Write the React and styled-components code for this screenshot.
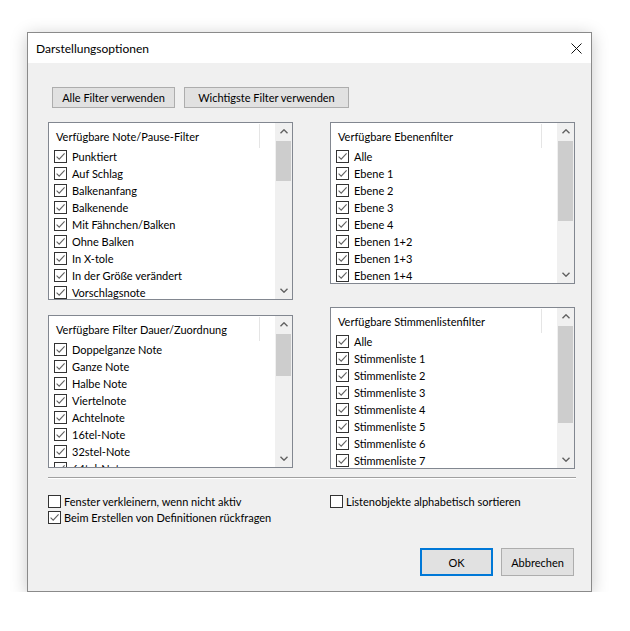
import React from "react";
import styled, { createGlobalStyle } from "styled-components";

const Global = createGlobalStyle`
  html, body { margin: 0; padding: 0; background: #ffffff; }
  body { font-family: Lato, "Liberation Sans", sans-serif; font-size: 11px; color: #000; }
  * { box-sizing: border-box; }
`;

const Page = styled.div`
  padding: 32px 0 0 27px;
`;

const Dialog = styled.div`
  width: 565px;
  height: 560px;
  border: 1px solid #8a8a8a;
  background: #f0f0f0;
  box-shadow: 0 3px 16px rgba(0, 0, 0, 0.22);
  display: flex;
  flex-direction: column;
`;

const TitleBar = styled.div`
  height: 30px;
  background: #ffffff;
  display: flex;
  align-items: center;
  justify-content: space-between;
  padding: 0 9px 0 8px;
  font-size: 12px;
`;

const CloseIcon = () => (
  <svg width="11" height="11" viewBox="0 0 11 11">
    <path d="M0.5 0.5 L10.5 10.5 M10.5 0.5 L0.5 10.5" stroke="#111" strokeWidth="1" />
  </svg>
);

const Body = styled.div`
  flex: 1;
  display: flex;
  flex-direction: column;
  padding: 0 15px 15px 20px;
`;

const TopButtons = styled.div`
  display: flex;
  gap: 9px;
  margin: 24px 0 0 4px;
`;

const Button = styled.button`
  height: ${(p) => p.$h || 21}px;
  width: ${(p) => p.$w}px;
  padding: 0;
  font-family: inherit;
  font-size: inherit;
  color: #000;
  background: #e1e1e1;
  border: ${(p) => (p.$default ? "2px solid #0078d7" : "1px solid #adadad")};
  display: flex;
  align-items: center;
  justify-content: center;
`;

const Columns = styled.div`
  display: grid;
  grid-template-columns: 245px 245px;
  column-gap: 37px;
  margin-top: 14px;
`;

const Column = styled.div`
  display: flex;
  flex-direction: column;
  gap: ${(p) => p.$gap}px;
`;

const ListBox = styled.div`
  height: ${(p) => p.$h}px;
  border: 1px solid #828790;
  background: #ffffff;
  display: flex;
  overflow: hidden;
`;

const ListContent = styled.div`
  flex: 1;
  display: flex;
  flex-direction: column;
  overflow: hidden;
`;

const HeaderCell = styled.div`
  height: 25px;
  flex: none;
  width: 211px;
  display: flex;
  align-items: center;
  padding: 1px 0 0 7px;
  white-space: nowrap;
  position: relative;
  &::after {
    content: "";
    position: absolute;
    right: 0;
    top: 1px;
    bottom: 0;
    width: 1px;
    background: #e5e5e5;
  }
`;

const Row = styled.div`
  height: 17px;
  flex: none;
  display: flex;
  align-items: center;
  padding: 0 0 0 5px;
  gap: 5px;
  white-space: nowrap;
`;

const ScrollBar = styled.div`
  width: 17px;
  flex: none;
  background: #f0f0f0;
  display: flex;
  flex-direction: column;
`;

const ArrowCell = styled.div`
  height: 17px;
  flex: none;
  display: flex;
  align-items: center;
  justify-content: center;
`;

const Track = styled.div`
  flex: 1;
  display: flex;
  flex-direction: column;
  padding: 1px 1px 0 1px;
`;

const Thumb = styled.div`
  background: #cdcdcd;
  flex: none;
`;

const Chevron = ({ down }) => (
  <svg width="8" height="5" viewBox="0 0 8 5">
    <polyline
      points={down ? "0.5,0.8 4,4.2 7.5,0.8" : "0.5,4.2 4,0.8 7.5,4.2"}
      fill="none"
      stroke="#606060"
      strokeWidth="1.4"
    />
  </svg>
);

const CheckBox = ({ checked }) => (
  <svg width="13" height="13" viewBox="0 0 13 13" style={{ flex: "none" }}>
    <rect x="0.5" y="0.5" width="12" height="12" fill="#fff" stroke="#333" strokeWidth="1" />
    {checked && (
      <polyline points="2.6,6.6 5.2,9.2 10.6,3.4" fill="none" stroke="#606060" strokeWidth="1.1" />
    )}
  </svg>
);

const Separator = styled.div`
  margin-top: 8px;
  height: 2px;
  border-top: 1px solid #a0a0a0;
  border-bottom: 1px solid #ffffff;
`;

const Options = styled.div`
  display: grid;
  grid-template-columns: 282px 1fr;
  margin-top: 14px;
`;

const OptionCol = styled.div`
  display: flex;
  flex-direction: column;
`;

const Option = styled.label`
  height: 16px;
  display: flex;
  align-items: center;
  gap: 3px;
  white-space: nowrap;
`;

const Footer = styled.div`
  margin-top: auto;
  display: flex;
  justify-content: flex-end;
  gap: 8px;
  padding-right: 2px;
`;

const FilterList = ({ title, items, height, thumb }) => (
  <ListBox $h={height}>
    <ListContent>
      <HeaderCell>{title}</HeaderCell>
      {items.map((it) => (
        <Row key={it}>
          <CheckBox checked />
          <span>{it}</span>
        </Row>
      ))}
    </ListContent>
    <ScrollBar>
      <ArrowCell>
        <Chevron />
      </ArrowCell>
      <Track>
        <Thumb style={{ height: thumb }} />
      </Track>
      <ArrowCell>
        <Chevron down />
      </ArrowCell>
    </ScrollBar>
  </ListBox>
);

const noteFilters = [
  "Punktiert",
  "Auf Schlag",
  "Balkenanfang",
  "Balkenende",
  "Mit Fähnchen/Balken",
  "Ohne Balken",
  "In X-tole",
  "In der Größe verändert",
  "Vorschlagsnote",
  "Stichnote",
  "Pause",
];

const layerFilters = [
  "Alle",
  "Ebene 1",
  "Ebene 2",
  "Ebene 3",
  "Ebene 4",
  "Ebenen 1+2",
  "Ebenen 1+3",
  "Ebenen 1+4",
  "Ebenen 2+3",
];

const durationFilters = [
  "Doppelganze Note",
  "Ganze Note",
  "Halbe Note",
  "Viertelnote",
  "Achtelnote",
  "16tel-Note",
  "32stel-Note",
  "64tel-Note",
  "128tel-Note",
];

const partFilters = [
  "Alle",
  "Stimmenliste 1",
  "Stimmenliste 2",
  "Stimmenliste 3",
  "Stimmenliste 4",
  "Stimmenliste 5",
  "Stimmenliste 6",
  "Stimmenliste 7",
  "Stimmenliste 8",
];

export default function App() {
  return (
    <Page>
      <Global />
      <Dialog>
        <TitleBar>
          <span>Darstellungsoptionen</span>
          <CloseIcon />
        </TitleBar>
        <Body>
          <TopButtons>
            <Button $w={123}>Alle Filter verwenden</Button>
            <Button $w={165}>Wichtigste Filter verwenden</Button>
          </TopButtons>
          <Columns>
            <Column $gap={15}>
              <FilterList title="Verfügbare Note/Pause-Filter" items={noteFilters} height={178} thumb={40} />
              <FilterList title="Verfügbare Filter Dauer/Zuordnung" items={durationFilters} height={153} thumb={42} />
            </Column>
            <Column $gap={23}>
              <FilterList title="Verfügbare Ebenenfilter" items={layerFilters} height={162} thumb={80} />
              <FilterList title="Verfügbare Stimmenlistenfilter" items={partFilters} height={162} thumb={97} />
            </Column>
          </Columns>
          <Separator />
          <Options>
            <OptionCol>
              <Option>
                <CheckBox />
                <span>Fenster verkleinern, wenn nicht aktiv</span>
              </Option>
              <Option>
                <CheckBox checked />
                <span>Beim Erstellen von Definitionen rückfragen</span>
              </Option>
            </OptionCol>
            <OptionCol>
              <Option>
                <CheckBox />
                <span>Listenobjekte alphabetisch sortieren</span>
              </Option>
            </OptionCol>
          </Options>
          <Footer>
            <Button $w={73} $h={28} $default>
              OK
            </Button>
            <Button $w={73} $h={28}>
              Abbrechen
            </Button>
          </Footer>
        </Body>
      </Dialog>
    </Page>
  );
}
